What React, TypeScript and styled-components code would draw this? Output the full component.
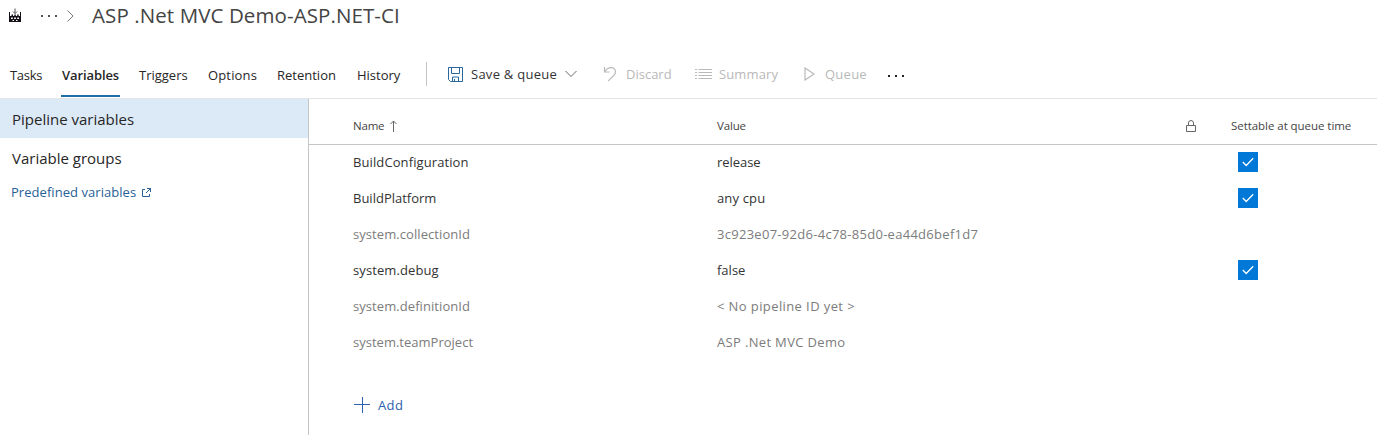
import React from 'react';
import styled, { createGlobalStyle } from 'styled-components';

const GlobalStyle = createGlobalStyle`
  * { box-sizing: border-box; }
  body {
    margin: 0;
    background: #fff;
    color: #262626;
    font: 13px/20px "Open Sans", "Noto Sans", sans-serif;
    white-space: nowrap;
    overflow: hidden;
  }
  svg { display: block; flex: none; }
`;

const Page = styled.div`
  display: flex;
  flex-direction: column;
  height: 435px;
`;

const Breadcrumb = styled.header`
  display: flex;
  align-items: center;
  height: 30px;
  margin-bottom: 22px;
  padding-left: 8px;
`;

const CrumbIcons = styled.div`
  display: flex;
  align-items: center;
  width: 84px;
  padding-top: 2px;
`;

const Title = styled.h1`
  margin: 0;
  font-size: 20.5px;
  font-weight: 400;
  letter-spacing: 0.09px;
  color: #444;
`;

const CommandBar = styled.div`
  display: flex;
  height: 47px;
  border-bottom: 1px solid #e3e4e6;
`;

const Tabs = styled.nav`
  display: flex;
  gap: 18px;
  padding-left: 9px;
`;

const Tab = styled.a<{ $width: number; $spacing?: number; $active?: boolean }>`
  width: ${p => p.$width}px;
  height: 45px;
  padding: 13px 0 0 1px;
  letter-spacing: ${p => p.$spacing ?? 0}px;
  font-weight: ${p => (p.$active ? 600 : 400)};
  border-bottom: 2px solid ${p => (p.$active ? '#1d6fa9' : 'transparent')};
`;

const Separator = styled.div`
  width: 1px;
  height: 24px;
  margin: 10px 21px 0 25px;
  background: #c4c4c4;
`;

const Commands = styled.div`
  display: flex;
  height: 44px;
  align-items: center;
`;

const Command = styled.button<{ $width: number; $gap: number; $spacing?: number; $disabled?: boolean }>`
  display: flex;
  align-items: center;
  gap: ${p => p.$gap}px;
  width: ${p => p.$width}px;
  padding: 0;
  border: 0;
  background: none;
  font: inherit;
  letter-spacing: ${p => p.$spacing ?? 0}px;
  color: ${p => (p.$disabled ? '#b9b9b9' : '#333')};
`;

const MoreButton = styled(Command)`
  padding: 3px 0 0 1px;
`;

const Body = styled.div`
  display: flex;
  flex: 1;
`;

const Sidebar = styled.aside`
  width: 309px;
  border-right: 1px solid #c3c5c8;
`;

const SideItem = styled.div<{ $selected?: boolean }>`
  height: 39px;
  padding-left: 12px;
  font-size: 15px;
  line-height: 40px;
  background: ${p => (p.$selected ? '#dceaf7' : 'transparent')};
`;

const SideLink = styled.a`
  display: flex;
  align-items: center;
  gap: 6px;
  margin-top: 5px;
  padding-left: 11px;
  letter-spacing: 0.05px;
  color: #275f96;
`;

const Main = styled.main`
  flex: 1;
`;

const Row = styled.div<{ $muted?: boolean }>`
  display: grid;
  grid-template-columns: 364px 469px 45px 1fr;
  align-items: center;
  height: 36px;
  padding-left: 44px;
  color: ${p => (p.$muted ? '#7c7c7c' : '#333')};
`;

const HeaderRow = styled(Row)`
  height: 46px;
  padding-top: 9px;
  border-bottom: 1px solid #c3c5c8;
  font-size: 11.5px;
  color: #444;
`;

const Rows = styled.div`
  margin-top: -1px;
`;

const Cell = styled.div<{ $spacing?: number }>`
  display: flex;
  align-items: center;
  gap: 6px;
  letter-spacing: ${p => p.$spacing ?? 0}px;
`;

const Checkbox = styled.div`
  display: grid;
  place-items: center;
  width: 20px;
  height: 20px;
  margin-left: 7px;
  background: #0078d7;
`;

const AddButton = styled.button`
  display: flex;
  align-items: center;
  gap: 8px;
  margin: 35px 0 0 45px;
  padding: 0;
  border: 0;
  background: none;
  font: inherit;
  letter-spacing: 0.4px;
  color: #2b62ad;
`;

const BuildIcon = () => (
  <svg width="14" height="16" viewBox="0 0 14 16">
    <path d="M7 .5v5M5 3.500L7 5.500 9 3.500" fill="none" stroke="#555" />
    <path
      fillRule="evenodd"
      fill="#150f18"
      d="M1 4h1v4h1.500V6.500h1.500V8h1.300V6.500h1.500V8h1.400V6.500h1.500V8H12V4h1v10H1zM3 9.500V11h1.800V9.500zm3.100 0V11h1.800V9.500zm3.100 0V11H11V9.500zM4.500 12v1H6v-1zM8 12v1h1.500v-1z"
    />
  </svg>
);

const Dots = ({ color = '#222' }: { color?: string }) => (
  <svg width="18" height="4" viewBox="0 0 18 4" fill={color}>
    <rect x="1" y="1" width="2" height="2" />
    <rect x="8" y="1" width="2" height="2" />
    <rect x="15" y="1" width="2" height="2" />
  </svg>
);

const CrumbChevron = () => (
  <svg width="8" height="12" viewBox="0 0 8 12" fill="none" stroke="#777">
    <path d="M1.500 .5L7 6 1.500 11.500" />
  </svg>
);

const CrumbDots = styled.div`
  margin: 0 8px 0 18px;
`;

const SaveIcon = () => (
  <svg width="15" height="15" viewBox="0 0 15 15" fill="none" stroke="#2a679f">
    <path d="M.5.5h14v14H2.500l-2-2zM3.500.5v6h8v-6M4.500 14v-4h6v4M6.500 12v2" />
  </svg>
);

const ChevronDown = () => (
  <svg width="12" height="8" viewBox="0 0 12 8" fill="none" stroke="#666">
    <path d="M.5 1L6 6.500 11.500 1" />
  </svg>
);

const UndoIcon = () => (
  <svg width="14" height="16" viewBox="0 0 14 16" fill="none" stroke="#b9b9b9" strokeWidth="1.200">
    <path d="M1.500 1v5h5M1.500 6C3 3.500 5 1.600 8 1.600c2.800 0 4.500 2 4.500 4.200 0 1.500-.6 2.500-1.600 3.500L5 15.200" />
  </svg>
);

const ListIcon = () => (
  <svg width="17" height="12" viewBox="0 0 17 12" fill="none" stroke="#b9b9b9">
    <path d="M0 1.500h2M3.500 1.500H17M0 4.500h2M3.500 4.500H17M0 7.500h2M3.500 7.500H17M0 10.500h2M3.500 10.500H17" />
  </svg>
);

const PlayIcon = () => (
  <svg width="11" height="14" viewBox="0 0 11 14" fill="none" stroke="#b9b9b9" strokeWidth="1.200">
    <path d="M1 1l9 6-9 6z" />
  </svg>
);

const ExternalIcon = () => (
  <svg width="9" height="9" viewBox="0 0 9 9" fill="none" stroke="#275f96">
    <path d="M3 1.500H.5v7h7V6M5 .5h3.500V4M8.500.5L4 5" />
  </svg>
);

const SortArrow = () => (
  <svg width="7" height="12" viewBox="0 0 7 12" fill="none" stroke="#666">
    <path d="M3.500 12V1M.5 4l3-3 3 3" />
  </svg>
);

const LockIcon = () => (
  <svg width="10" height="13" viewBox="0 0 10 13" fill="none" stroke="#666">
    <path d="M.5 5.500h9v6h-9zM2.500 5.500V3a2.500 2.500 0 0 1 5 0v2.500" />
  </svg>
);

const CheckIcon = () => (
  <svg width="12" height="10" viewBox="0 0 12 10" fill="none" stroke="#fff" strokeWidth="1.300">
    <path d="M.8 5l3.400 3.500L11.200 1.200" />
  </svg>
);

const PlusIcon = () => (
  <svg width="16" height="16" viewBox="0 0 16 16" fill="none" stroke="#2b62ad">
    <path d="M8.500 0v16M0 7.500h16" />
  </svg>
);

type Variable = { name: string; value: string; settable?: boolean; ns?: number; vs?: number };

const variables: Variable[] = [
  { name: 'BuildConfiguration', value: 'release', settable: true, ns: 0.1, vs: -0.05 },
  { name: 'BuildPlatform', value: 'any cpu', settable: true, vs: 0.15 },
  { name: 'system.collectionId', value: '3c923e07-92d6-4c78-85d0-ea44d6bef1d7', ns: 0.07, vs: 0.28 },
  { name: 'system.debug', value: 'false', settable: true, ns: 0.1 },
  { name: 'system.definitionId', value: '< No pipeline ID yet >', ns: 0.07, vs: 0.4 },
  { name: 'system.teamProject', value: 'ASP .Net MVC Demo', ns: 0.01, vs: 0.34 },
];

export default function App() {
  return (
    <Page>
      <GlobalStyle />
      <Breadcrumb>
        <CrumbIcons>
          <BuildIcon />
          <CrumbDots><Dots color="#555" /></CrumbDots>
          <CrumbChevron />
        </CrumbIcons>
        <Title>ASP .Net MVC Demo-ASP.NET-CI</Title>
      </Breadcrumb>
      <CommandBar>
        <Tabs>
          <Tab $width={34} $spacing={-0.3}>Tasks</Tab>
          <Tab $width={59} $spacing={-0.1} $active>Variables</Tab>
          <Tab $width={51}>Triggers</Tab>
          <Tab $width={51} $spacing={0.15}>Options</Tab>
          <Tab $width={62}>Retention</Tab>
          <Tab $width={45}>History</Tab>
        </Tabs>
        <Separator />
        <Commands>
          <Command $width={155} $gap={8} $spacing={0.26}>
            <SaveIcon />Save &amp; queue<ChevronDown />
          </Command>
          <Command $width={92} $gap={9} $disabled><UndoIcon />Discard</Command>
          <Command $width={109} $gap={7} $spacing={0.12} $disabled><ListIcon />Summary</Command>
          <Command $width={82} $gap={10} $spacing={0.25} $disabled><PlayIcon />Queue</Command>
          <MoreButton $width={19} $gap={0}><Dots /></MoreButton>
        </Commands>
      </CommandBar>
      <Body>
        <Sidebar>
          <SideItem $selected>Pipeline variables</SideItem>
          <SideItem>Variable groups</SideItem>
          <SideLink>Predefined variables<ExternalIcon /></SideLink>
        </Sidebar>
        <Main>
          <HeaderRow>
            <Cell $spacing={-0.2}>Name<SortArrow /></Cell>
            <Cell $spacing={-0.15}>Value</Cell>
            <Cell><LockIcon /></Cell>
            <Cell $spacing={-0.05}>Settable at queue time</Cell>
          </HeaderRow>
          <Rows>
            {variables.map(v => (
              <Row key={v.name} $muted={!v.settable}>
                <Cell $spacing={v.ns}>{v.name}</Cell>
                <Cell $spacing={v.vs}>{v.value}</Cell>
                <Cell />
                <Cell>{v.settable && <Checkbox><CheckIcon /></Checkbox>}</Cell>
              </Row>
            ))}
          </Rows>
          <AddButton><PlusIcon />Add</AddButton>
        </Main>
      </Body>
    </Page>
  );
}
